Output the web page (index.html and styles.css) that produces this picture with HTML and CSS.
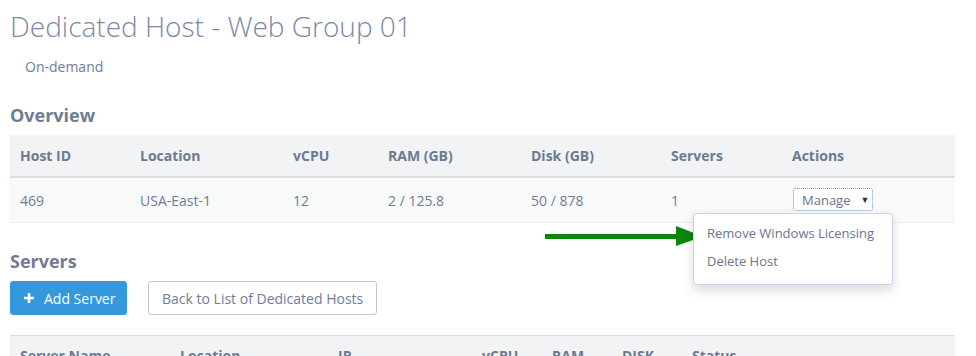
FILE: index.html
```html
<!DOCTYPE html>
<html lang="en">
<head>
<meta charset="UTF-8">
<title>Dedicated Host - Web Group 01</title>
<link rel="stylesheet" href="styles.css">
</head>
<body>
<div class="page">
  <h1 class="title">Dedicated Host - Web Group 01</h1>
  <div class="billing">On-demand</div>

  <h2 class="section">Overview</h2>
  <table class="grid overview">
    <colgroup>
      <col style="width:120px"><col style="width:153px"><col style="width:95px"><col style="width:143px">
      <col style="width:140px"><col style="width:121px"><col>
    </colgroup>
    <thead>
      <tr><th>Host ID</th><th>Location</th><th>vCPU</th><th>RAM (GB)</th><th>Disk (GB)</th><th>Servers</th><th>Actions</th></tr>
    </thead>
    <tbody>
      <tr>
        <td>469</td><td>USA-East-1</td><td>12</td><td>2 / 125.8</td><td>50 / 878</td><td>1</td>
        <td>
          <div class="actions">
            <button class="manage"><span>Manage</span><span class="caret">&#9660;</span></button>
            <ul class="menu">
              <li>Remove Windows Licensing</li>
              <li>Delete Host</li>
            </ul>
          </div>
        </td>
      </tr>
    </tbody>
  </table>

  <h2 class="section servers">Servers</h2>
  <div class="toolbar">
    <button class="btn primary">
      <svg class="plus" width="10" height="10" viewBox="0 0 10 10"><path d="M5 0v10M0 5h10" stroke="#fff" stroke-width="2.6"/></svg>
      Add Server
    </button>
    <button class="btn">Back to List of Dedicated Hosts</button>
  </div>

  <table class="grid list">
    <colgroup>
      <col style="width:160px"><col style="width:158px"><col style="width:144px"><col style="width:70px">
      <col style="width:70px"><col style="width:70px"><col>
    </colgroup>
    <thead>
      <tr><th>Server Name</th><th>Location</th><th>IP</th><th>vCPU</th><th>RAM</th><th>DISK</th><th>Status</th></tr>
    </thead>
  </table>

  <svg class="pointer" width="160" height="22" viewBox="0 0 160 22">
    <rect x="0" y="9" width="134" height="5" fill="#0b870b"/>
    <polygon points="131,1 158,11.5 131,21" fill="#0b870b"/>
  </svg>
</div>
</body>
</html>
```

FILE: styles.css
```css
body {
  margin: 0;
  font-family: "Open Sans", sans-serif;
  font-size: 14px;
  color: #6f7d96;
  background: #fff;
}
.page {
  position: relative;
  padding: 0 21px 0 10px;
}
.title {
  margin: 0;
  padding-top: 7px;
  font-size: 28px;
  font-weight: 300;
  line-height: 38px;
  color: #7b8aa6;
}
.billing {
  margin: 12px 0 0 15px;
  line-height: 20px;
  color: #6f7d96;
}
.section {
  margin: 25px 0 0;
  font-size: 18px;
  font-weight: 700;
  line-height: 26px;
  color: #6f7d93;
}
.grid {
  width: 100%;
  border-collapse: collapse;
  table-layout: fixed;
  margin-top: 7px;
}
.grid th {
  text-align: left;
  font-weight: 700;
  color: #6c7a91;
  background: #f2f3f5;
  padding: 0 10px;
  height: 41px;
  border-bottom: 2px solid #dcdcdc;
}
.grid td {
  background: #f8f9f9;
  padding: 0 10px;
  height: 44px;
  border-bottom: 1px solid #eceeef;
}
.actions {
  position: relative;
  display: inline-block;
  vertical-align: middle;
  margin-top: -1px;
}
.manage {
  display: flex;
  align-items: center;
  gap: 10px;
  white-space: nowrap;
  font-family: inherit;
  font-size: 13px;
  color: #6b7488;
  background: #fff;
  border: 1px dotted #6f9fd6;
  border-radius: 2px;
  height: 23px;
  width: 80px;
  padding: 0 7px 0 8px;
  margin-left: 1px;
}
.caret {
  font-size: 9px;
  color: #333;
}
.menu {
  position: absolute;
  left: -99px;
  top: 25px;
  width: 198px;
  margin: 0;
  padding: 5px 0 9px;
  list-style: none;
  background: #fff;
  border: 1px solid #c9d4e8;
  border-radius: 3px;
  box-shadow: 0 5px 12px rgba(0, 0, 0, 0.15);
  z-index: 2;
}
.menu li {
  padding: 0 13px;
  font-size: 13px;
  line-height: 28px;
  color: #6b7490;
  white-space: nowrap;
}
.servers {
  margin-top: 25px;
}
.toolbar {
  display: flex;
  gap: 21px;
  margin-top: 7px;
}
.btn {
  font-family: inherit;
  font-size: 14px;
  height: 34px;
  padding: 0 13px;
  color: #6f7d96;
  background: #fff;
  border: 1px solid #c6c6c6;
  border-radius: 3px;
}
.btn.primary {
  display: flex;
  align-items: center;
  width: 117px;
  color: #fff;
  background: #3498db;
  border-color: #3498db;
  padding: 0 0 0 13px;
}
.plus {
  margin-right: 10px;
}
.list {
  margin-top: 20px;
}
.list th {
  border-top: 1px solid #dcdcdc;
  border-bottom: 0;
  vertical-align: top;
  padding-top: 10px;
}
.pointer {
  position: absolute;
  left: 545px;
  top: 225px;
}
```
